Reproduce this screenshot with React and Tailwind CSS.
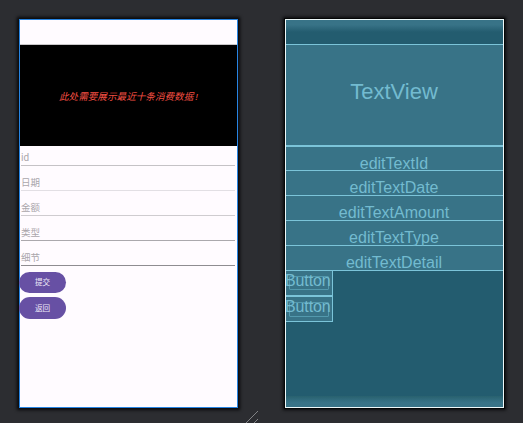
const fields = ['id', '日期', '金额', '类型', '细节'];
const lineColors = ['border-[#c5c2c6]', 'border-[#e2dfe4]', 'border-[#cfccd0]', 'border-[#aba8ad]', 'border-[#8f8c91]'];
const ids = ['editTextId', 'editTextDate', 'editTextAmount', 'editTextType', 'editTextDetail'];

function PreviewButton({ children, className }) {
  return (
    <div className={`flex w-[47px] -ml-px items-center justify-center rounded-full bg-[#6750a4] text-[7.6px] leading-none text-[#eee8f8] ${className}`}>
      {children}
    </div>
  );
}

function DesignSurface() {
  return (
    <div className="flex h-[389px] w-[219px] flex-col border border-[#2784e2] bg-[#fffbff] shadow-[0_0_3px_2px_#08090b]">
      <div className="h-[25px] shrink-0 border-b border-[#c9c7c9]" />
      <div className="flex h-[101px] shrink-0 items-center justify-center bg-black pt-0.5 text-[9.6px] italic leading-none text-[#f44f43]">
        <span className="whitespace-nowrap">
          此处需要展示最近十条消费数据<span className="ml-0.5">!</span>
        </span>
      </div>
      {fields.map((name, i) => (
        <div
          key={name}
          className={`ml-px mr-[2px] flex shrink-0 items-end border-b leading-[10px] text-[#aaa6ab] ${lineColors[i]} ${i === 0 ? "h-5 pb-[2px] font-['Roboto'] text-[10px]" : 'h-[25px] pb-[2px] text-[9.5px]'}`}
        >
          {name}
        </div>
      ))}
      <PreviewButton className="mt-1.5 h-[21px]">提交</PreviewButton>
      <PreviewButton className="mt-1 h-[22px] pt-px">返回</PreviewButton>
    </div>
  );
}

function BlueprintButton({ className, innerClass }) {
  return (
    <div className={`relative w-[47px] border-r border-[#7bc4d9] bg-[#387387] ${className}`}>
      <div className={`ml-[3px] w-10 rounded-[1px] border border-[#5399ad] ${innerClass}`} />
      <span className="absolute -left-px top-0 text-base leading-5 tracking-[-0.1px] text-[#73bbd0]">Button</span>
    </div>
  );
}

function Blueprint() {
  return (
    <div className="flex h-[389px] w-[219px] flex-col overflow-hidden border border-[#edf8f9] bg-[#235c6f] text-[#73bbd0] shadow-[0_0_0_1px_#050607,0_0_3px_2px_#08090b]">
      <div className="h-[25px] shrink-0 border-b border-[#7bc4d9] bg-linear-to-b from-[#387387] from-20% to-[#235c6f] to-50%" />
      <div className="flex h-[102px] shrink-0 items-center justify-center border-b-2 border-[#7bc4d9] bg-[#387387] pb-[7px] pr-px text-[22px]">
        TextView
      </div>
      {ids.map((id, i) => (
        <div
          key={id}
          className={`flex shrink-0 items-end justify-center border-b border-[#7bc4d9] bg-[#387387] pr-px text-base ${i === 0 ? 'h-6 leading-[13px]' : 'h-[25px] leading-[15px]'}`}
        >
          {id}
        </div>
      ))}
      <BlueprintButton className="h-[26px] shrink-0 border-b-2 pt-[5px]" innerClass="h-3.5" />
      <BlueprintButton className="h-[25px] shrink-0 border-b pt-[5px]" innerClass="h-[15px]" />
      <div className="mt-auto h-[11px] shrink-0 bg-linear-to-b from-[#28616f] to-[#387387] to-60%" />
    </div>
  );
}

export default function App() {
  return (
    <div className="relative flex h-[423px] w-[523px] items-start gap-[47px] overflow-hidden bg-[#2c2d31] pl-[19px] pt-[19px] font-['Liberation_Sans','Noto_Sans_CJK_SC',sans-serif]">
      <DesignSurface />
      <Blueprint />
      <svg className="absolute left-[245px] top-[410px]" width="14" height="13" fill="none" stroke="#828386" strokeWidth="1">
        <path d="M.5 13.5 13 1M8.5 13.5 13 9" />
      </svg>
    </div>
  );
}
